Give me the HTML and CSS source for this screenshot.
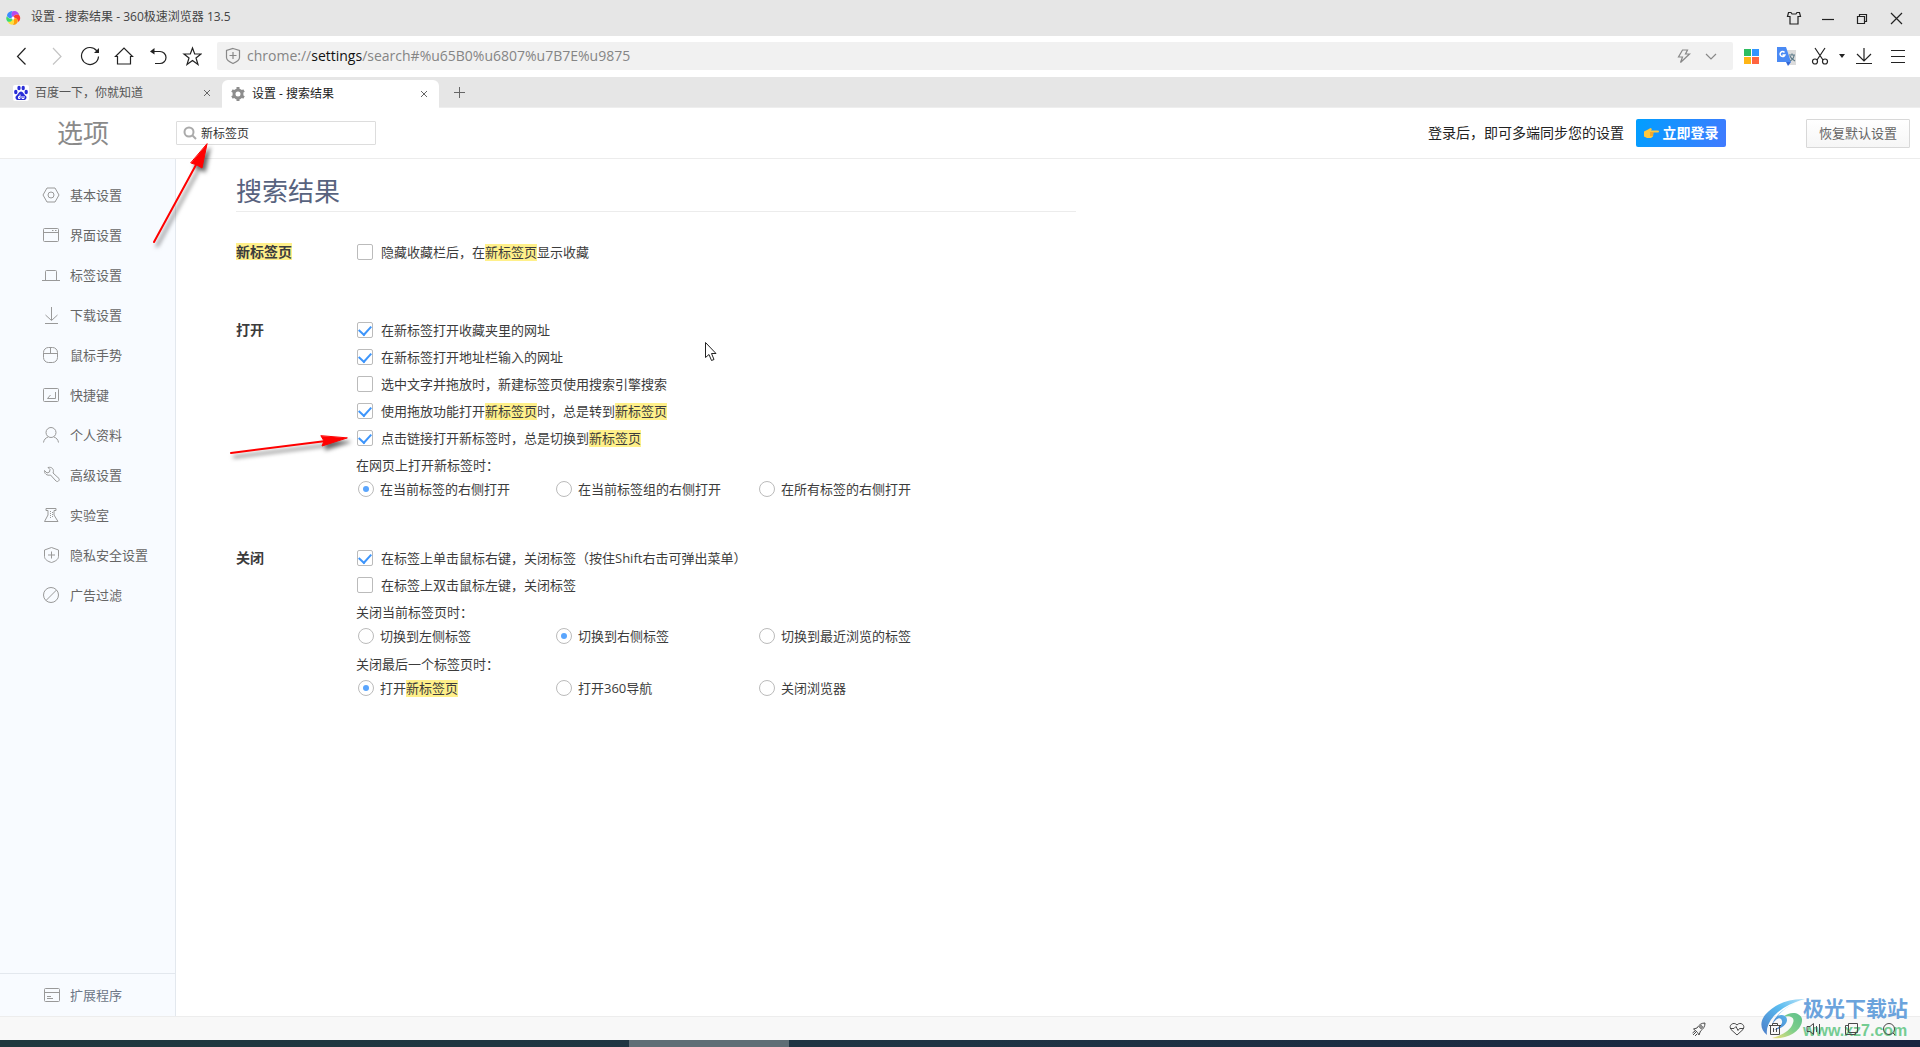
FILE: index.html
```html
<!DOCTYPE html>
<html lang="zh-CN">
<head>
<meta charset="utf-8">
<title>设置 - 搜索结果</title>
<link rel="stylesheet" href="styles.css">
</head>
<body>
<div class="window">
  <header class="titlebar">
    <svg class="logo" width="16" height="16" viewBox="0 0 16 16">
      <path fill="#b44af0" d="M8 8C5 5 6 1 9 1c3 0 5 2 5 4-2-1-5-1-6 3z"/>
      <path fill="#ff3b30" d="M8 8c1-4 5-4 6.500-2.500C16 8 15 11 13 12c0-3-2-4.500-5-4z"/>
      <path fill="#ff9f0a" d="M8 8c4 0 5.500 2 4.500 4.500C11 15 9 15 7.500 14.500 9.500 13 9.500 10 8 8z"/>
      <path fill="#ffe03a" d="M8 8c2 3 1 6-1 6.800C4.500 14.500 3 13 3 11.500 5.500 12 7.500 11 8 8z"/>
      <path fill="#3ddc6a" d="M8 8c-.5 3.500-3.500 4.500-5.500 3.500C.8 9.500 1 7.500 2 6c1 2.500 3.500 3.500 6 2z"/>
      <path fill="#3a8bff" d="M8 8C4 9 2 7 2 5c1-3 3.500-4 5.500-4C6 3 6 6 8 8z"/>
      <circle cx="8" cy="8" r="1.500" fill="#fff"/>
    </svg>
    <span class="window-title">设置 - 搜索结果 - 360极速浏览器 13.5</span>
    <div class="window-buttons">
      <button class="tool" aria-label="皮肤"><svg width="16" height="16" viewBox="0 0 16 16"><path d="M5 2.500h-2.500l-1 4h2.500v7.500h8v-7.500h2.500l-1-4h-2.500l-1 1.500h-4z"/></svg></button>
      <button class="tool" aria-label="最小化"><svg width="16" height="16" viewBox="0 0 16 16"><path d="M2 9.500h12"/></svg></button>
      <button class="tool" aria-label="还原"><svg width="16" height="16" viewBox="0 0 16 16"><path d="M3.500 6.500h7v7h-7zM5.500 6.500v-2h7v7h-2"/></svg></button>
      <button class="tool" aria-label="关闭"><svg width="16" height="16" viewBox="0 0 16 16"><path d="M3 3l11 11M14 3L3 14"/></svg></button>
    </div>
  </header>

  <nav class="toolbar">
    <button class="tool" aria-label="后退"><svg width="20" height="20" viewBox="0 0 20 20"><path d="M13.500 2L5.500 10.500l8 8"/></svg></button>
    <button class="tool dim" aria-label="前进"><svg width="20" height="20" viewBox="0 0 20 20"><path d="M7 2l8 8.500-8 8"/></svg></button>
    <button class="tool" aria-label="刷新"><svg width="20" height="20" viewBox="0 0 20 20"><path d="M18.500 10.500a8.500 8.500 0 1 1-2-6L18.500 6"/><path class="solid" d="M19 2v5h-5z"/></svg></button>
    <button class="tool" aria-label="主页"><svg width="20" height="20" viewBox="0 0 20 20"><path d="M1.500 10.500L10 2l8.500 8.500h-2V18h-13v-7.500z"/></svg></button>
    <button class="tool" aria-label="撤销"><svg width="20" height="20" viewBox="0 0 20 20"><path d="M4 5.500h8a6 6 0 0 1 0 12H7"/><path class="solid" d="M2 5.500L6.500 2v6.500z"/></svg></button>
    <button class="tool" aria-label="收藏"><svg width="20" height="20" viewBox="0 0 20 20"><path d="M10.500 2l2.200 6h6.300l-5 4 2 6.500-5.500-4-5.500 4 2-6.500-5-4h6.300z"/></svg></button>
    <div class="address">
      <svg class="shield" width="16" height="18" viewBox="0 0 16 18"><path d="M8 1.500l6.500 2v7c0 3-3 4.500-6.500 6-3.500-1.500-6.500-3-6.500-6v-7zM8 5v7M4.500 8.500h7"/></svg>
      <a class="url" href="#">chrome://<b>settings</b>/search#%u65B0%u6807%u7B7E%u9875</a>
      <svg class="shield" width="14" height="16" viewBox="0 0 14 16"><path d="M10.500 2H5.500L1.500 9h4l-2 5.500L12.500 6h-4z"/></svg>
      <svg class="shield" width="12" height="12" viewBox="0 0 12 12"><path d="M1 4l5 5 5-5"/></svg>
    </div>
    <button class="tool" aria-label="应用"><svg class="flat" width="16" height="16" viewBox="0 0 16 16"><path fill="#2dbd60" d="M0 1h7v7H0z"/><path fill="#3295ff" d="M8 1h7v7H8z"/><path fill="#ffb515" d="M0 9h7v7H0z"/><path fill="#ff6440" d="M8 9h7v7H8z"/></svg></button>
    <button class="tool" aria-label="翻译"><svg class="flat" width="20" height="20" viewBox="0 0 20 20"><path fill="#dcdcdc" d="M9 4h11v15h-7z"/><path fill="#4a8af4" d="M1 1h9l5 15H1z"/><path fill="#3367d6" d="M10 16h5l-3 4z"/><path fill="none" stroke="#fff" stroke-width="1.500" d="M8.500 6.500a2.500 2.500 0 1 0 .4 2.500H6.500"/><path fill="none" stroke="#607d8b" d="M13 9h6M16 7.500V9M18 9c0 3-2 5-4 6M14 10c1 3 3 4 5 5"/></svg></button>
    <button class="tool" aria-label="截图"><svg width="20" height="20" viewBox="0 0 20 20"><path d="M5 2l8 12M15 2L7 14"/><circle cx="5" cy="15.500" r="2.500"/><circle cx="15" cy="15.500" r="2.500"/></svg></button>
    <button class="tool caret" aria-label="更多"><svg width="6" height="4" viewBox="0 0 6 4"><path class="solid" d="M0 0h6L3 4z"/></svg></button>
    <button class="tool" aria-label="下载"><svg width="20" height="20" viewBox="0 0 20 20"><path d="M10 2v13M3 8l7 7 7-7M2 17.500h16"/></svg></button>
    <button class="tool" aria-label="菜单"><svg width="16" height="16" viewBox="0 0 16 16"><path d="M1 2.500h14M1 8.500h14M1 14.500h14"/></svg></button>
  </nav>

  <div class="tabs">
    <div class="tab">
      <svg width="16" height="16" viewBox="0 0 16 16"><rect width="16" height="16" rx="2" fill="#fff"/><g fill="#2a2ed8"><ellipse cx="2.800" cy="7" rx="1.700" ry="2.200"/><ellipse cx="6" cy="3" rx="1.700" ry="2.300"/><ellipse cx="10.200" cy="3" rx="1.700" ry="2.300"/><ellipse cx="13.200" cy="7" rx="1.700" ry="2.200"/><path d="M8 6.500c2 0 3 3 5 4.500 1.500 2-.5 4.500-2.500 4H5.500c-2 .5-4-2-2.500-4C5 9.500 6 6.500 8 6.500z"/></g><path fill="none" stroke="#fff" d="M7 9.500v4H5.500v-2H7M9 11v2.500h2V11"/></svg>
      <span class="tab-name">百度一下，你就知道</span>
      <button class="close" aria-label="关闭标签"><svg width="8" height="8" viewBox="0 0 8 8"><path d="M1 1l6 6M7 1L1 7"/></svg></button>
    </div>
    <div class="tab active">
      <svg width="16" height="16" viewBox="0 0 16 16"><circle cx="8" cy="8" r="4" fill="none" stroke="#8d8d8d" stroke-width="3"/><path fill="none" stroke="#8d8d8d" stroke-width="3" d="M8 1v2.500M8 12.500V15M2 4.500l2 1.200M12 10.300l2 1.200M2 11.500l2-1.200M12 5.700l2-1.200"/></svg>
      <span class="tab-name">设置 - 搜索结果</span>
      <button class="close" aria-label="关闭标签"><svg width="8" height="8" viewBox="0 0 8 8"><path d="M1 1l6 6M7 1L1 7"/></svg></button>
    </div>
    <button class="new-tab" aria-label="新建标签"><svg width="12" height="12" viewBox="0 0 12 12"><path d="M6.500 1v11M1 6.500h11"/></svg></button>
  </div>

  <div class="page-head">
    <h1 class="brand">选项</h1>
    <label class="search">
      <svg width="14" height="14" viewBox="0 0 14 14"><circle cx="6" cy="6" r="4.500"/><path d="M9.500 9.500l3.500 3.500"/></svg>
      <input type="text" value="新标签页" aria-label="搜索设置">
    </label>
    <span class="sync">登录后，即可多端同步您的设置</span>
    <button class="login"><svg width="15" height="10" viewBox="0 0 15 10"><path fill="#ffc83d" d="M0 3.500L4 1.500 6.500 0 8 1 7 2.500h7a1 1 0 0 1 0 2H9.500L9 8.500 7 10H3L0 8.500z"/><path fill="none" stroke="#e08a1c" d="M6 5h3.500M6 7h3"/></svg>立即登录</button>
    <button class="reset">恢复默认设置</button>
  </div>

  <div class="body">
    <aside class="sidebar">
      <nav class="menu">
        <a href="#"><svg width="18" height="18" viewBox="0 0 18 18"><path d="M5 2h8l4 7-4 7H5L1 9z"/><circle cx="9" cy="9" r="3"/></svg>基本设置</a>
        <a href="#"><svg width="18" height="18" viewBox="0 0 18 18"><rect x="1.500" y="2.500" width="15" height="13" rx="1"/><path d="M1.500 6.500h15M10 4.500h1.500M13 4.500h1.500"/></svg>界面设置</a>
        <a href="#"><svg width="18" height="18" viewBox="0 0 18 18"><path d="M0 14.500h18M3.500 14.500v-9a1 1 0 0 1 1-1h9a1 1 0 0 1 1 1v9"/></svg>标签设置</a>
        <a href="#"><svg width="18" height="18" viewBox="0 0 18 18"><path d="M9.500 1v13M3.500 9l6 5.500 6-5.500M3 17.500h13"/></svg>下载设置</a>
        <a href="#"><svg width="18" height="18" viewBox="0 0 18 18"><rect x="1.500" y="1.500" width="14" height="15" rx="5"/><path d="M1.500 7.500h14M8.500 1.500v6"/></svg>鼠标手势</a>
        <a href="#"><svg width="18" height="18" viewBox="0 0 18 18"><rect x="1.500" y="2.500" width="15" height="13" rx="1"/><path d="M13.500 6v6.500H5.500l3-3.500"/></svg>快捷键</a>
        <a href="#"><svg width="18" height="18" viewBox="0 0 18 18"><circle cx="9" cy="6.500" r="5"/><path d="M1.500 16.500c.5-3 2-4.500 4.500-5.500M16.500 16.500c-.5-3-2-4.500-4.500-5.500"/></svg>个人资料</a>
        <a href="#"><svg width="18" height="18" viewBox="0 0 18 18"><path d="M6 1.500c4-1 6.500 2 5 5.500l6 5.500c1 2-1.500 4-3 2.500L8.500 9C5 10 2 7.500 2.500 4.500L5 7l2.500-1L8 3.500z"/></svg>高级设置</a>
        <a href="#"><svg width="18" height="18" viewBox="0 0 18 18"><path d="M4 2.500h10v2h-2V9l4 6.500H2.500L6 9V4.500H4z"/><path stroke-dasharray="1 1" d="M8.500 5v7M10.500 6v6"/></svg>实验室</a>
        <a href="#"><svg width="18" height="18" viewBox="0 0 18 18"><path d="M9.500 1.500L16.500 4v6.500c0 3-3.500 5-7 6-3.500-1-7-3-7-6V4zM9.500 5.500v7M6 9h7"/></svg>隐私安全设置</a>
        <a href="#"><svg width="18" height="18" viewBox="0 0 18 18"><circle cx="9" cy="9" r="7.500"/><path d="M4 14.500L14.500 4"/></svg>广告过滤</a>
      </nav>
      <a class="extensions" href="#"><svg width="18" height="18" viewBox="0 0 18 18"><rect x="2.500" y="2.500" width="15" height="13" rx="1"/><path d="M2.500 6.500h15M5 10.500h4M5 12.500h6"/></svg>扩展程序</a>
    </aside>

    <main class="content">
      <h2 class="heading">搜索结果</h2>
      <section class="section">
        <h3><mark>新标签页</mark></h3>
        <div class="options">
          <label class="check"><input type="checkbox"><span>隐藏收藏栏后，在<mark>新标签页</mark>显示收藏</span></label>
        </div>
      </section>
      <section class="section">
        <h3>打开</h3>
        <div class="options">
          <label class="check"><input type="checkbox" checked><span>在新标签打开收藏夹里的网址</span></label>
          <label class="check"><input type="checkbox" checked><span>在新标签打开地址栏输入的网址</span></label>
          <label class="check"><input type="checkbox"><span>选中文字并拖放时，新建标签页使用搜索引擎搜索</span></label>
          <label class="check"><input type="checkbox" checked><span>使用拖放功能打开<mark>新标签页</mark>时，总是转到<mark>新标签页</mark></span></label>
          <label class="check"><input type="checkbox" checked><span>点击链接打开新标签时，总是切换到<mark>新标签页</mark></span></label>
          <p>在网页上打开新标签时：</p>
          <div class="radios">
            <label><input type="radio" name="open" checked><span>在当前标签的右侧打开</span></label>
            <label><input type="radio" name="open"><span>在当前标签组的右侧打开</span></label>
            <label><input type="radio" name="open"><span>在所有标签的右侧打开</span></label>
          </div>
        </div>
      </section>
      <section class="section">
        <h3>关闭</h3>
        <div class="options">
          <label class="check"><input type="checkbox" checked><span>在标签上单击鼠标右键，关闭标签（按住Shift右击可弹出菜单）</span></label>
          <label class="check"><input type="checkbox"><span>在标签上双击鼠标左键，关闭标签</span></label>
          <p>关闭当前标签页时：</p>
          <div class="radios">
            <label><input type="radio" name="close"><span>切换到左侧标签</span></label>
            <label><input type="radio" name="close" checked><span>切换到右侧标签</span></label>
            <label><input type="radio" name="close"><span>切换到最近浏览的标签</span></label>
          </div>
          <p>关闭最后一个标签页时：</p>
          <div class="radios">
            <label><input type="radio" name="last" checked><span>打开<mark>新标签页</mark></span></label>
            <label><input type="radio" name="last"><span>打开360导航</span></label>
            <label><input type="radio" name="last"><span>关闭浏览器</span></label>
          </div>
        </div>
      </section>
    </main>
  </div>

  <footer class="statusbar">
    <div class="watermark">
      <svg width="46" height="42" viewBox="0 0 46 42">
        <defs>
          <linearGradient id="sky" x1="0" y1="1" x2="1" y2="0"><stop offset="0" stop-color="#4a7cc8"/><stop offset=".6" stop-color="#5bbcf0"/><stop offset="1" stop-color="#b8e2f7"/></linearGradient>
          <linearGradient id="leaf" x1="0" y1="1" x2="1" y2="0"><stop offset="0" stop-color="#f2e07a"/><stop offset=".5" stop-color="#7fcf8a"/><stop offset="1" stop-color="#5fc08c"/></linearGradient>
        </defs>
        <path fill="url(#sky)" d="M45 1C30 0 14 6 5 17-1 25 1 32 7 37 5 25 16 9 45 1z"/>
        <path fill="url(#leaf)" d="M12 40c16 2 31-8 30-19-1-6-11-9-19-2 8-2 12 1 10 6-2 7-10 12-21 15z"/>
        <path fill="url(#sky)" d="M40 3C24 9 14 19 12 27c5-8 9-8 10-4 1 3-3 6-8 9 8-1 13-6 13-10 0-5-6-6-9-4C22 12 30 7 40 3z"/>
      </svg>
      <div class="watermark-text"><strong>极光下载站</strong><em>www.xz7.com</em></div>
    </div>
    <button class="status" aria-label="加速"><svg width="16" height="16" viewBox="0 0 16 16"><path d="M14 2c-4 0-6 2-8 5L2.500 8 5 10l1.500 1.500L8 14l1.500-4C12 8 14 6 14 2zM2 14l3-3M4 15l2-2M1.500 12L4 10"/><circle cx="10" cy="6" r="1.300"/></svg></button>
    <button class="status" aria-label="医生"><svg width="16" height="16" viewBox="0 0 16 16"><path d="M8 14L2 8.500C-1 4.500 4.500 0 8 4c3.500-4 9 .5 6 4.500zM2 7.500h3L7 5.500l2 4 1.500-2H14"/></svg></button>
    <button class="status" aria-label="清理"><svg width="16" height="16" viewBox="0 0 16 16"><path d="M2 4.500h12M5.500 4V2.500h5V4M3.500 4.500v9h9v-9M6.500 7v4M9.500 7v4"/></svg></button>
    <button class="status" aria-label="声音"><svg width="16" height="16" viewBox="0 0 16 16"><path d="M2 5.500h3L8.500 2.500v11L5 10.500H2zM11.500 5v6M14.500 3v10"/></svg></button>
    <button class="status" aria-label="窗口"><svg width="16" height="16" viewBox="0 0 16 16"><path d="M5.500 2.500h9v9h-9zM5 4.500H2.500v9h10V12"/></svg></button>
    <button class="status" aria-label="缩放"><svg width="16" height="16" viewBox="0 0 16 16"><circle cx="8" cy="8" r="5.500"/><path d="M12 12l2 2"/></svg></button>
  </footer>
  <div class="taskbar"><span class="task"></span></div>

  <svg class="notes" width="720" height="480" viewBox="0 0 720 480">
    <g class="arrow">
      <path d="M154 242L197 163" stroke-width="2"/>
      <path d="M207 144L202 168 197 165 191 163z"/>
      <path d="M231 453L326 441" stroke-width="2"/>
      <path d="M347 438L322 446 324 441 321 436z"/>
    </g>
    <path fill="#fff" stroke="#222" d="M705.500 342.500v15l3.500-3 2.500 6 2.500-1-2.500-6h4.500z"/>
  </svg>
</div>
</body>
</html>
```
FILE: styles.css
```css
* {
  box-sizing: border-box;
}

body {
  margin: 0;
  font: 13px/20px "Open Sans", "Noto Sans CJK SC", sans-serif;
  color: #3c3c3c;
  background: #fff;
}

a {
  color: inherit;
  text-decoration: none;
}

button {
  padding: 0;
  border: 0;
  background: none;
  font: inherit;
  color: inherit;
}

svg {
  flex: none;
}

h1, h2, h3, p {
  margin: 0;
  font-weight: 400;
}

.window {
  position: relative;
  display: flex;
  flex-direction: column;
  min-height: 100vh;
}

.titlebar {
  display: flex;
  align-items: center;
  height: 36px;
  padding: 0 7px 0 5px;
  background: #e6e6e6;
}

.window-title {
  flex: 1;
  margin-left: 10px;
  padding-bottom: 2px;
  font-size: 12px;
  color: #444;
}

.window-buttons {
  display: flex;
}

.tool {
  display: flex;
  align-items: center;
  justify-content: center;
  width: 34px;
  height: 34px;
}

.tool svg {
  fill: none;
  stroke: #222;
  stroke-width: 1.2;
}

.tool svg.flat {
  stroke: none;
}

.tool .solid {
  fill: #222;
  stroke: none;
}

.tool.dim svg {
  stroke: #c4c4c4;
}

.tool.caret {
  width: 10px;
}

.toolbar {
  display: flex;
  align-items: center;
  height: 41px;
  padding: 0 5px 2px;
}

.address {
  display: flex;
  flex: 1;
  align-items: center;
  gap: 14px;
  height: 28px;
  margin: 0 2px 0 8px;
  padding: 0 16px 0 8px;
  border-radius: 2px;
  background: #f1f1f1;
}

.shield {
  fill: none;
  stroke: #888;
  stroke-width: 1.2;
}

.url {
  flex: 1;
  margin-left: -8px;
  font-size: 14px;
  color: #858585;
}

.url b {
  font-weight: 400;
  color: #111;
}

.tabs {
  display: flex;
  align-items: flex-end;
  height: 31px;
  background: #e6e6e6;
  border-bottom: 1px solid #eee;
}

.tab {
  display: flex;
  align-items: center;
  width: 222px;
  height: 28px;
  padding: 0 9px 0 13px;
  font-size: 12px;
  color: #555;
}

.tab.active {
  width: 217px;
  margin-bottom: -1px;
  padding-left: 8px;
  border-radius: 6px 6px 0 0;
  background: #fff;
  color: #222;
}

.tab-name {
  flex: 1;
  margin-left: 6px;
}

.close, .new-tab {
  display: flex;
  align-items: center;
  justify-content: center;
  width: 12px;
  height: 12px;
}

.close svg, .new-tab svg {
  fill: none;
  stroke: #666;
}

.new-tab {
  width: 40px;
  height: 30px;
}

.page-head {
  display: flex;
  align-items: center;
  height: 51px;
  padding-right: 10px;
  border-bottom: 1px solid #ececec;
}

.brand {
  width: 176px;
  padding-left: 57px;
  font-size: 26px;
  color: #8a8a8a;
}

.search {
  display: flex;
  align-items: center;
  width: 200px;
  height: 24px;
  margin-right: auto;
  padding-left: 6px;
  border: 1px solid #ddd;
  border-radius: 1px;
}

.search svg {
  fill: none;
  stroke: #aaa;
  stroke-width: 2;
}

.search input {
  flex: 1;
  min-width: 0;
  padding: 1px 4px 0;
  border: 0;
  outline: 0;
  background: none;
  font: inherit;
  font-size: 12px;
  color: #333;
}

.sync {
  font-size: 14px;
  color: #222;
}

.login {
  display: flex;
  align-items: center;
  justify-content: center;
  gap: 4px;
  width: 90px;
  height: 28px;
  margin: 0 80px 0 12px;
  border-radius: 2px;
  background: linear-gradient(110deg, #009fff, #417aff);
  font-size: 14px;
  font-weight: 700;
  color: #fff;
}

.reset {
  width: 104px;
  height: 29px;
  border: 1px solid #d8d8d8;
  border-radius: 1px;
  background: linear-gradient(#fff, #f6f6f6);
  color: #666;
}

.body {
  display: flex;
  flex: 1;
}

.sidebar {
  display: flex;
  flex-direction: column;
  justify-content: space-between;
  width: 176px;
  border-right: 1px solid #e3e8ee;
  background: #f8fbff;
}

.menu {
  padding-top: 16px;
}

.menu a, .extensions {
  display: flex;
  align-items: center;
  gap: 10px;
  height: 40px;
  padding-left: 42px;
  color: #666;
}

.sidebar svg {
  fill: none;
  stroke: #999;
}

.extensions {
  height: 43px;
  border-top: 1px solid #e3e8ee;
  color: #6c7686;
}

.content {
  flex: 1;
  padding: 12px 60px 0;
}

.heading {
  max-width: 840px;
  margin-bottom: 26px;
  border-bottom: 1px solid #ececec;
  font-size: 26px;
  line-height: 40px;
  color: #58637e;
}

.section {
  display: flex;
  min-height: 37px;
  margin-bottom: 41px;
}

.section h3 {
  width: 120px;
  font-size: 14px;
  line-height: 27px;
  font-weight: 700;
}

mark {
  background: #fff08a;
  color: inherit;
  line-height: 17px;
  display: inline-block;
}

.options p, .check {
  display: flex;
  align-items: center;
  height: 27px;
}

.check {
  gap: 8px;
  padding-left: 1px;
}

.check input, .radios input {
  display: grid;
  place-items: center;
  appearance: none;
  flex: none;
  width: 16px;
  height: 16px;
  margin: 0;
  border: 1px solid #bbb;
  border-radius: 2px;
  background: #fff;
}

.check input:checked::before {
  content: "";
  width: 6px;
  height: 10px;
  margin-bottom: 2px;
  border: solid #3d95fb;
  border-width: 0 2px 2px 0;
  transform: rotate(42deg);
}

.radios {
  display: grid;
  grid-template-columns: 198px 203px 1fr;
  height: 21px;
  margin-bottom: 4px;
  padding-left: 2px;
}

.radios label {
  display: flex;
  align-items: center;
  gap: 6px;
}

.radios input {
  border-radius: 50%;
}

.radios input:checked::before {
  content: "";
  width: 6px;
  height: 6px;
  border-radius: 50%;
  background: #5aa5fd;
}

.statusbar {
  position: relative;
  display: flex;
  justify-content: flex-end;
  height: 24px;
  padding-right: 12px;
  border-top: 1px solid #ededed;
  background: #f8f8f8;
}

.status {
  position: relative;
  display: flex;
  align-items: center;
  justify-content: center;
  width: 38px;
}

.status svg {
  fill: none;
  stroke: #4a4a4a;
}

.watermark {
  position: absolute;
  right: 10px;
  bottom: 0;
  display: flex;
  align-items: flex-end;
}

.watermark svg {
  margin-right: -3px;
}

.watermark-text {
  display: flex;
  flex-direction: column;
  width: 107px;
  white-space: nowrap;
}

.watermark strong {
  font: 700 21px/30px "Noto Sans CJK SC", sans-serif;
  color: #6ba3dc;
}

.watermark em {
  font: 700 16px/18px "Liberation Sans", sans-serif;
  color: #74cc92;
}

.taskbar {
  display: grid;
  grid-template-columns: 629fr 160fr 1131fr;
  height: 7px;
  background: linear-gradient(90deg, #1f383e, #1f3444 50%, #18243f);
}

.task {
  grid-column: 2;
  background: #5f6e76;
}

.notes {
  position: absolute;
  top: 0;
  left: 0;
  pointer-events: none;
}

.arrow {
  fill: #f00;
  stroke: #f00;
  stroke-linecap: round;
  filter: drop-shadow(3px 4px 2px rgba(0, 0, 0, .6));
}
```
